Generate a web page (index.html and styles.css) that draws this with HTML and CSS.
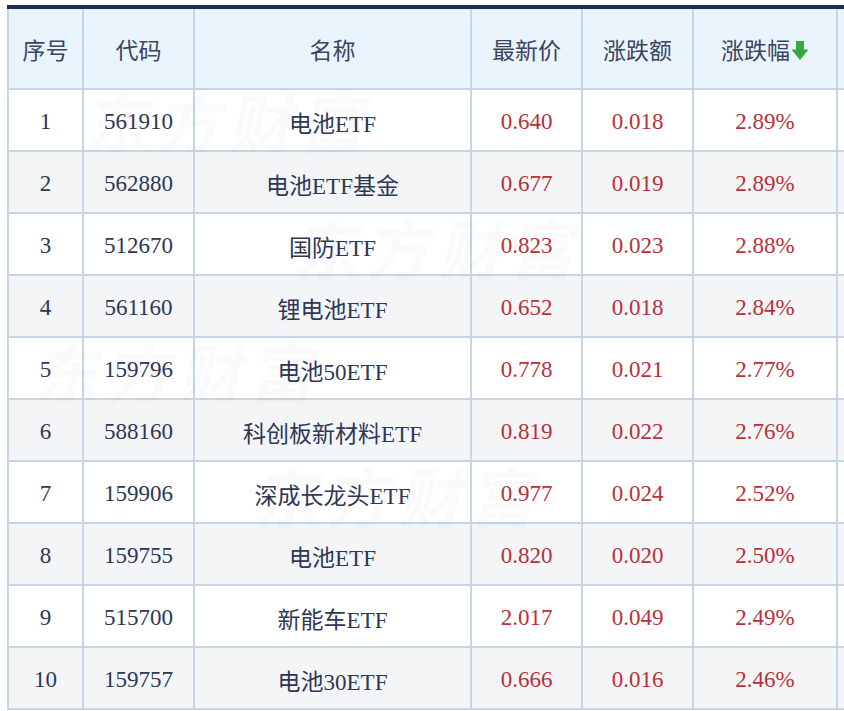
FILE: index.html
```html
<!DOCTYPE html>
<html lang="zh-CN">
<head>
<meta charset="utf-8">
<title>ETF 涨跌幅排行</title>
<link rel="stylesheet" href="styles.css">
</head>
<body>
<div class="wrap">
  <table class="grid">
    <colgroup>
      <col class="c-no"><col class="c-code"><col class="c-name"><col class="c-num"><col class="c-num"><col class="c-pct"><col class="c-extra">
    </colgroup>
    <thead>
      <tr>
        <th>序号</th><th>代码</th><th>名称</th><th>最新价</th><th>涨跌额</th>
        <th>涨跌幅<svg class="arrow" viewBox="0 0 18 21" width="18" height="21" aria-hidden="true"><path d="M5 1h8v8.5h4.5L9 20 0.5 9.5H5z" fill="#35a93b"/></svg></th>
        <th></th>
      </tr>
    </thead>
    <tbody>
      <tr><td>1</td><td>561910</td><td>电池ETF</td><td class="up">0.640</td><td class="up">0.018</td><td class="up">2.89%</td><td></td></tr>
      <tr><td>2</td><td>562880</td><td>电池ETF基金</td><td class="up">0.677</td><td class="up">0.019</td><td class="up">2.89%</td><td></td></tr>
      <tr><td>3</td><td>512670</td><td>国防ETF</td><td class="up">0.823</td><td class="up">0.023</td><td class="up">2.88%</td><td></td></tr>
      <tr><td>4</td><td>561160</td><td>锂电池ETF</td><td class="up">0.652</td><td class="up">0.018</td><td class="up">2.84%</td><td></td></tr>
      <tr><td>5</td><td>159796</td><td>电池50ETF</td><td class="up">0.778</td><td class="up">0.021</td><td class="up">2.77%</td><td></td></tr>
      <tr><td>6</td><td>588160</td><td>科创板新材料ETF</td><td class="up">0.819</td><td class="up">0.022</td><td class="up">2.76%</td><td></td></tr>
      <tr><td>7</td><td>159906</td><td>深成长龙头ETF</td><td class="up">0.977</td><td class="up">0.024</td><td class="up">2.52%</td><td></td></tr>
      <tr><td>8</td><td>159755</td><td>电池ETF</td><td class="up">0.820</td><td class="up">0.020</td><td class="up">2.50%</td><td></td></tr>
      <tr><td>9</td><td>515700</td><td>新能车ETF</td><td class="up">2.017</td><td class="up">0.049</td><td class="up">2.49%</td><td></td></tr>
      <tr><td>10</td><td>159757</td><td>电池30ETF</td><td class="up">0.666</td><td class="up">0.016</td><td class="up">2.46%</td><td></td></tr>
    </tbody>
  </table>
  <div class="wm wm1" aria-hidden="true">东方财富</div>
  <div class="wm wm2" aria-hidden="true">东方财富</div>
  <div class="wm wm3" aria-hidden="true">东方财富</div>
  <div class="wm wm4" aria-hidden="true">东方财富</div>
</div>
</body>
</html>
```
FILE: styles.css
```css
html, body {
  margin: 0;
  padding: 0;
  background: #ffffff;
  overflow: hidden;
}
.wrap {
  position: relative;
  padding: 5px 0 0 7px;
  width: 980px;
}
.grid {
  border-collapse: collapse;
  table-layout: fixed;
  width: 930px;
  font-family: "Liberation Serif", "Noto Sans CJK SC", serif;
  font-size: 23px;
  color: #2c3855;
  border-top: 4px solid #1d2c57;
  border-left: 2px solid #c6d6e4;
}
.c-no { width: 75px; }
.c-code { width: 111px; }
.c-name { width: 277px; }
.c-num { width: 111px; }
.c-pct { width: 144px; }
.c-extra { width: 101px; }
th, td {
  border: 2px solid #c6d6e4;
  text-align: center;
  vertical-align: middle;
  padding: 0;
  white-space: nowrap;
}
th {
  height: 79px;
  background: #eaf4fd;
  font-weight: 400;
  color: #3a4560;
}
td {
  height: 62px;
  padding-top: 3px;
  box-sizing: border-box;
}
tbody tr:nth-child(odd) td { background: #ffffff; }
tbody tr:nth-child(even) td { background: #f4f5f7; }
.up { color: #b9303a; }
.arrow {
  vertical-align: -2px;
  margin-left: 1px;
}
.wm {
  position: absolute;
  font-family: "Noto Sans CJK SC", sans-serif;
  font-weight: 700;
  font-size: 64px;
  letter-spacing: 8px;
  color: rgba(60, 70, 90, 0.028);
  pointer-events: none;
  white-space: nowrap;
  line-height: 1;
  transform: skewX(-12deg);
}
.wm1 { left: 90px; top: 88px; }
.wm2 { left: 300px; top: 214px; }
.wm3 { left: 40px; top: 338px; }
.wm4 { left: 260px; top: 462px; }
```
